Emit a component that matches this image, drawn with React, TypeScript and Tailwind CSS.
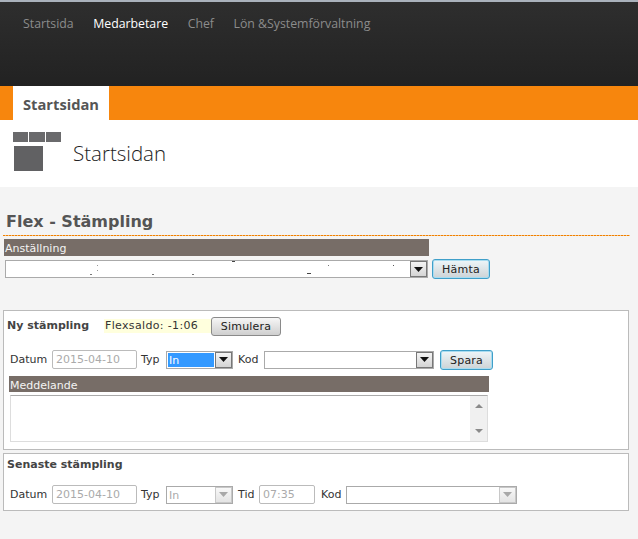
import React from 'react';

const navItems = [
  { label: 'Startsida', active: false },
  { label: 'Medarbetare', active: true },
  { label: 'Chef', active: false },
  { label: 'Lön &Systemförvaltning', active: false },
];

const Arrow: React.FC<{ disabled?: boolean }> = ({ disabled }) => (
  <div className={`w-[17px] h-full shrink-0 border flex items-center justify-center bg-gradient-to-b ${disabled ? 'border-[#c8c8c8] from-[#f8f8f8] to-[#e4e4e4]' : 'border-[#777] from-[#f4f4f4] to-[#d4d4d4]'}`}>
    <svg width="9" height="5" viewBox="0 0 9 5">
      <path d="M0 0h9L4.5 5z" fill={disabled ? '#a8a8a8' : '#111'} />
    </svg>
  </div>
);

const Select: React.FC<{ width: string; value?: string; disabled?: boolean; highlight?: boolean; children?: React.ReactNode }> = ({ width, value, disabled, highlight, children }) => (
  <div className={`${width} relative h-[18px] flex bg-white border border-[#aaa]`}>
    <div className="flex-1 min-w-0 p-px">
      {value && (
        <div className={`h-full pl-px leading-[15px] ${highlight ? 'bg-[#3399ff] text-white' : ''} ${disabled ? 'text-[#aaa]' : ''}`}>
          {value}
        </div>
      )}
    </div>
    <Arrow disabled={disabled} />
    {children}
  </div>
);

const DateInput: React.FC<{ width: string; value: string }> = ({ width, value }) => (
  <div className={`${width} h-[19px] bg-white border border-[#bbb] rounded-[2px] pl-[3px] leading-[18px] text-[#aaa]`}>{value}</div>
);

const Button: React.FC<{ className: string; focused?: boolean; children: React.ReactNode }> = ({ className, focused, children }) => (
  <button className={`${className} rounded-[3px] border bg-gradient-to-b text-[#222] text-center leading-[15px] tracking-[0.2px] ${focused ? 'border-[#3f9fc9] from-[#eef6f9] to-[#cdd3d6] shadow-[inset_0_0_0_1px_#a9dcf0]' : 'border-[#8a8a8a] from-[#f6f6f6] to-[#cfcfcf]'}`}>
    {children}
  </button>
);

const SectionBar: React.FC<{ className: string; children: React.ReactNode }> = ({ className, children }) => (
  <div className={`${className} bg-[#776d67] text-[#f4f4f4] pl-px leading-[19px]`}>{children}</div>
);

const App: React.FC = () => {
  return (
    <div className="w-[638px] h-[539px] overflow-hidden bg-[#f4f4f4] font-['DejaVu_Sans',sans-serif] text-[11px] text-[#333]">
      <div className="h-[2px] bg-[#aab2bc]" />
      <header className="h-[84px] bg-gradient-to-b from-[#2e2e2e] to-[#222] pl-[23px] pt-[13px] flex gap-[19.5px] items-start font-['Open_Sans',sans-serif] text-[12.3px] leading-[18px]">
        {navItems.map((item) => (
          <span key={item.label} className={item.active ? 'text-white' : 'text-[#8c8c8c]'}>{item.label}</span>
        ))}
      </header>
      <div className="h-[34px] bg-[#f7860d] pl-[13px]">
        <div className="w-[96px] h-[34px] bg-white text-center font-['Open_Sans',sans-serif] font-bold text-[14.7px] leading-[36px] text-[#555]">Startsidan</div>
      </div>
      <div className="h-[67px] bg-white pl-[13px] pt-[12px] flex items-start gap-[12px]">
        <div className="w-[48px] flex flex-col gap-[4px]">
          <div className="flex gap-[1px]">
            <div className="w-[15px] h-[10px] bg-[#6a6a6c]" />
            <div className="w-[16px] h-[10px] bg-[#6a6a6c]" />
            <div className="w-[15px] h-[10px] bg-[#6a6a6c]" />
          </div>
          <div className="ml-px w-[29px] h-[25px] bg-[#616163]" />
        </div>
        <div className="font-['Open_Sans',sans-serif] font-light text-[20.5px] leading-[28px] text-[#222] mt-[7px]">Startsidan</div>
      </div>

      <main className="pt-[23px] pl-[3px]">
        <h1 className="pl-[3px] font-bold text-[16px] leading-[24px] text-[#555]">Flex - Stämpling</h1>
        <div className="w-[627px] mt-px h-px bg-[repeating-linear-gradient(90deg,#f08000_0,#f08000_2px,#f7c080_2px,#f7c080_3px)]" />
        <div className="pl-px pt-[3px]">
          <SectionBar className="w-[425px] h-[17px]">Anställning</SectionBar>
          <div className="flex items-start gap-[4px] pt-[4px]">
            <Select width="w-[423px] ml-px">
              <span className="absolute left-[91px] top-[4px] w-[1px] h-[1px] bg-[#999]" />
              <span className="absolute left-[91px] top-[9px] w-[1px] h-[1px] bg-[#999]" />
              <span className="absolute left-[226px] top-0 w-[3px] h-[1px] bg-[#444]" />
              <span className="absolute left-[84px] top-[13px] w-[2px] h-[1px] bg-[#777]" />
              <span className="absolute left-[146px] top-[13px] w-[2px] h-[1px] bg-[#777]" />
              <span className="absolute left-[186px] top-[13px] w-[2px] h-[1px] bg-[#777]" />
              <span className="absolute left-[301px] top-[12px] w-[4px] h-[1px] bg-[#444]" />
              <span className="absolute left-[322px] top-[4px] w-[1px] h-[1px] bg-[#777]" />
              <span className="absolute left-[387px] top-[4px] w-[1px] h-[1px] bg-[#555]" />
            </Select>
            <Button className="w-[58px] h-[20px] -mt-px" focused>Hämta</Button>
          </div>
        </div>

        <section className="w-[626px] h-[140px] mt-[31px] bg-white border border-[#bbb] pl-[3px]">
          <div className="flex items-center h-[29px] pt-[1px]">
            <span className="w-[97px] font-bold text-[#444]">Ny stämpling</span>
            <span className="w-[107px] h-[14px] bg-[#ffffdd] leading-[14px] pl-px tracking-[0.35px] text-[#333]">Flexsaldo: -1:06</span>
            <Button className="w-[70px] h-[19px]">Simulera</Button>
          </div>
          <div className="flex items-center gap-[4px] mt-[10px] pl-[3px] h-[19px]">
            <span className="w-[38px] pt-[2px]">Datum</span>
            <DateInput width="w-[85px]" value="2015-04-10" />
            <span className="w-[21px] pt-[2px]">Typ</span>
            <Select width="w-[67px]" value="In" highlight />
            <span className="w-[22px] ml-px pt-[2px]">Kod</span>
            <Select width="w-[170px]" />
            <Button className="w-[53px] h-[20px] ml-[2px] self-start" focused>Spara</Button>
          </div>
          <div className="pl-[2px] pt-[7px]">
            <SectionBar className="w-[480px] h-[16px]">Meddelande</SectionBar>
          </div>
          <div className="relative ml-[3px] mt-[3px] w-[478px] h-[47px] bg-white border border-[#ddd] border-t-[#aaa] flex justify-end">
            <div className="w-[17px] h-full bg-[#f0f0f0] flex flex-col items-center justify-between py-[8px]">
              <svg width="8" height="4" viewBox="0 0 8 4"><path d="M0 4L4 0l4 4z" fill="#8a8a8a" /></svg>
              <svg width="8" height="4" viewBox="0 0 8 4"><path d="M0 0h8L4 4z" fill="#8a8a8a" /></svg>
            </div>
          </div>
        </section>

        <section className="w-[626px] h-[58px] mt-[3px] bg-white border border-[#bbb] pl-[3px]">
          <div className="font-bold text-[#444] leading-[14px] pt-[4px] h-[18px]">Senaste stämpling</div>
          <div className="flex items-center gap-[4px] mt-[13px] pl-[3px] h-[19px]">
            <span className="w-[38px] pt-[2px]">Datum</span>
            <DateInput width="w-[85px]" value="2015-04-10" />
            <span className="w-[21px] pt-[2px]">Typ</span>
            <Select width="w-[67px]" value="In" disabled />
            <span className="w-[17px] ml-px pt-[2px]">Tid</span>
            <DateInput width="w-[56px]" value="07:35" />
            <span className="w-[21px] ml-[2px] pt-[2px]">Kod</span>
            <Select width="w-[171px]" disabled />
          </div>
        </section>
      </main>
    </div>
  );
};

export default App;
